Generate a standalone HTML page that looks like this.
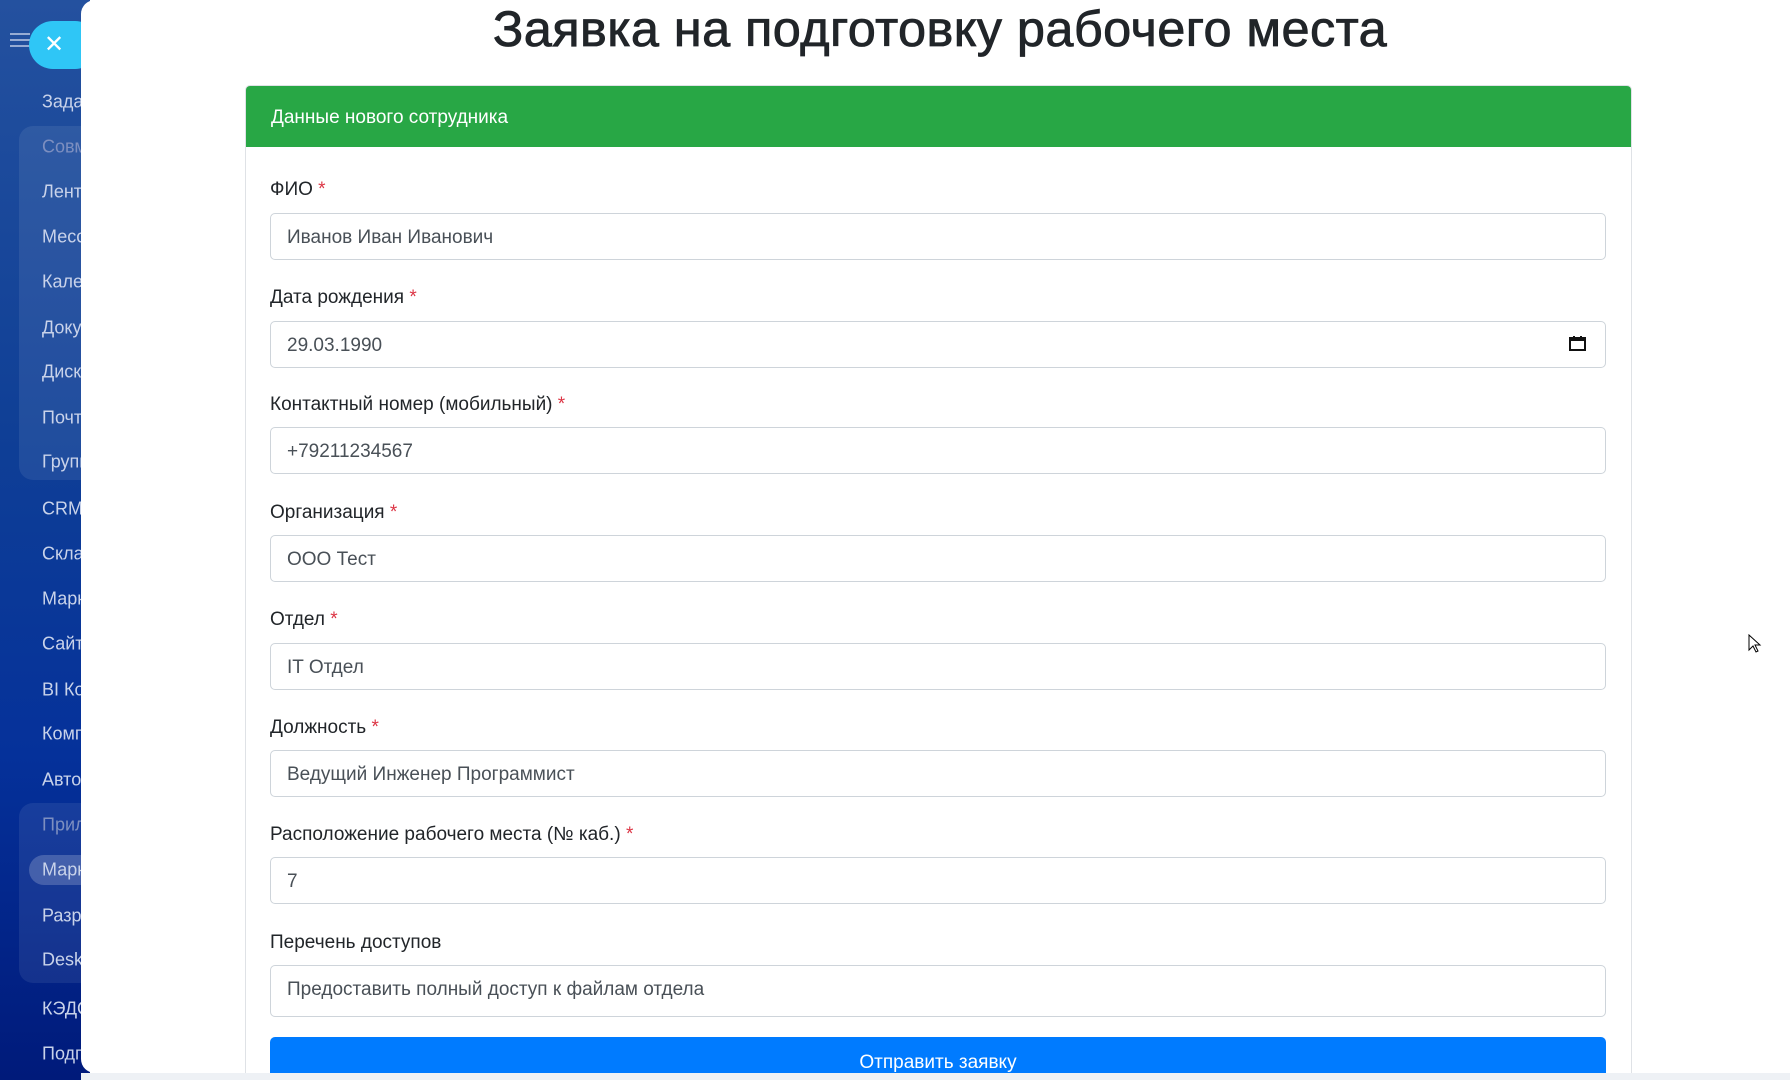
<!DOCTYPE html>
<html><head><meta charset="utf-8"><style>
*{box-sizing:border-box;margin:0;padding:0}
html,body{width:1790px;height:1080px;overflow:hidden}
body{background:#fff;font-family:"Liberation Sans",sans-serif;position:relative}
#side{position:absolute;left:0;top:0;width:90px;height:1080px;background:linear-gradient(180deg,#24519f 0%,#0f3f96 40%,#05319a 70%,#001a7a 100%)}
.it{position:absolute;left:42px;font-size:18px;color:#c9d3ea;white-space:nowrap;transform:translateY(-50%)}
.dim{color:#7d8fc0}
.grp{position:absolute;left:19px;width:80px;background:rgba(255,255,255,0.08);border-radius:14px}
#panel{position:absolute;left:81px;top:0;width:1709px;height:1073px;background:#fff;border-radius:14px 0 0 14px;overflow:hidden}
#strip{position:absolute;left:81px;top:1073px;width:1709px;height:7px;background:#eef1f5;z-index:5}
h1{position:absolute;left:0;width:1880px;top:-1px;text-align:center;font-size:50.5px;font-weight:normal;color:#212529;-webkit-text-stroke:0.8px #212529;letter-spacing:0.4px}
#card{position:absolute;left:245px;top:85px;width:1387px;height:988px;border:1px solid #dfe2e6;border-bottom:none;border-radius:5px 5px 0 0;overflow:hidden}
#hdr{height:61px;background:#28a745;color:#fff;font-size:19px;padding-left:25px;line-height:63px}
.lb{position:absolute;left:270px;font-size:19px;color:#212529;transform:translateY(-50%);margin-top:2px}
.lb b{color:#dc3545;font-weight:normal}
.in{position:absolute;left:270px;width:1336px;height:47px;border:1px solid #ced4da;border-radius:5px;font-size:19px;color:#495057;padding-left:16px;line-height:48px}
#btnwrap{position:absolute;left:270px;top:1037px;width:1336px;height:36px;overflow:hidden}
#btn{width:1336px;height:50px;background:#007bff;border-radius:5px;color:#fff;font-size:19px;text-align:center;line-height:52px}
</style></head><body>
<div id="side">
<div class="grp" style="top:126px;height:354px"></div>
<div class="grp" style="top:803px;height:180px"></div>
<div style="position:absolute;left:10px;top:33px;width:20px;height:2px;background:#c9d3ea;box-shadow:0 6px 0 #c9d3ea,0 12px 0 #c9d3ea;opacity:.7"></div>
<div style="position:absolute;left:29px;top:21px;width:70px;height:48px;border-radius:24px;background:#2fc6f6"></div>
<div style="position:absolute;left:44px;top:30px;color:#fff;font-size:24px">✕</div>
<div style="position:absolute;left:29px;top:855px;width:70px;height:30px;border-radius:15px;background:rgba(255,255,255,0.2)"></div>
<div class="it" style="top:102px">Задачи</div>
<div class="it dim" style="top:147px">Совместная</div>
<div class="it" style="top:192px">Лента</div>
<div class="it" style="top:237px">Мессенджер</div>
<div class="it" style="top:282px">Календарь</div>
<div class="it" style="top:328px">Документы</div>
<div class="it" style="top:372px">Диск</div>
<div class="it" style="top:418px">Почта</div>
<div class="it" style="top:462px">Группы</div>
<div class="it" style="top:509px">CRM</div>
<div class="it" style="top:554px">Склад</div>
<div class="it" style="top:599px">Маркетинг</div>
<div class="it" style="top:644px">Сайты</div>
<div class="it" style="top:690px">BI Конструктор</div>
<div class="it" style="top:734px">Компания</div>
<div class="it" style="top:780px">Автоматизация</div>
<div class="it dim" style="top:825px">Приложения</div>
<div class="it" style="top:870px">Маркет</div>
<div class="it" style="top:916px">Разработчикам</div>
<div class="it" style="top:960px">Desktop</div>
<div class="it" style="top:1009px">КЭДО</div>
<div class="it" style="top:1054px">Подписка</div>
</div>
<div id="panel"></div>
<div id="strip"></div>
<h1>Заявка на подготовку рабочего места</h1>
<div id="card"><div id="hdr">Данные нового сотрудника</div></div>
<div class="lb" style="top:188px">ФИО <b>*</b></div>
<div class="in" style="top:213px">Иванов Иван Иванович</div>
<div class="lb" style="top:296px">Дата рождения <b>*</b></div>
<div class="in" style="top:321px">29.03.1990
<svg style="position:absolute;right:19px;top:14px" width="17" height="16" viewBox="0 0 17 16"><rect x="1" y="2" width="15" height="12" fill="none" stroke="#111" stroke-width="2"/><rect x="1" y="2" width="15" height="3" fill="#111"/><rect x="4" y="0" width="2" height="3" fill="#111"/><rect x="11" y="0" width="2" height="3" fill="#111"/></svg></div>
<div class="lb" style="top:403px">Контактный номер (мобильный) <b>*</b></div>
<div class="in" style="top:427px">+79211234567</div>
<div class="lb" style="top:511px">Организация <b>*</b></div>
<div class="in" style="top:535px">ООО Тест</div>
<div class="lb" style="top:618px">Отдел <b>*</b></div>
<div class="in" style="top:643px">IT Отдел</div>
<div class="lb" style="top:726px">Должность <b>*</b></div>
<div class="in" style="top:750px">Ведущий Инженер Программист</div>
<div class="lb" style="top:833px">Расположение рабочего места (№ каб.) <b>*</b></div>
<div class="in" style="top:857px">7</div>
<div class="lb" style="top:941px">Перечень доступов</div>
<div class="in" style="top:965px;height:52px">Предоставить полный доступ к файлам отдела</div>
<div id="btnwrap"><div id="btn">Отправить заявку</div></div>
<svg style="position:absolute;left:1748px;top:634px" width="14" height="20" viewBox="0 0 14 20"><path d="M1 1 L1 16 L5 12 L8 18 L10 17 L7 11 L12 11 Z" fill="#fff" stroke="#000" stroke-width="1"/></svg>
</body></html>
